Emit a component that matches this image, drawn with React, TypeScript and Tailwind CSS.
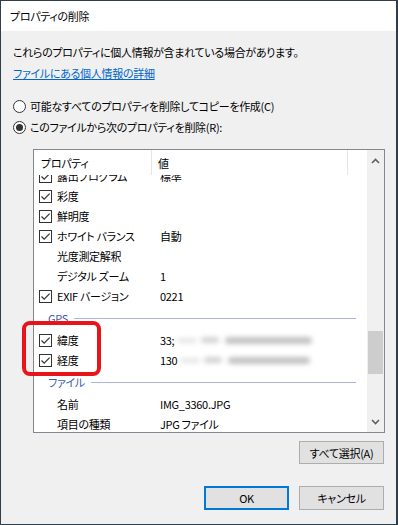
import React from "react";

const font = "font-['Yu_Gothic_UI','Noto_Sans_CJK_JP',sans-serif] [font-feature-settings:'palt'] tracking-[-0.3px]";

function Check({ checked = true }: { checked?: boolean }) {
  return (
    <div className="w-[13px] h-[13px] border border-[#333333] bg-white flex items-center justify-center shrink-0">
      {checked && (
        <svg width="11" height="11" viewBox="0 0 11 11">
          <path d="M1.5 5.5 L4.2 8.2 L9.6 2.6" fill="none" stroke="#333333" strokeWidth="1.2" />
        </svg>
      )}
    </div>
  );
}

function Radio({ selected }: { selected?: boolean }) {
  return (
    <div className="w-[13px] h-[13px] rounded-full border border-[#333333] bg-white flex items-center justify-center shrink-0">
      {selected && <div className="w-[7px] h-[7px] rounded-full bg-[#333333]" />}
    </div>
  );
}

type Row = { label: string; value?: React.ReactNode; check?: boolean; style?: string };

function ItemRow({ label, value, check, style }: Row) {
  return (
    <div className={"flex items-center h-[20px] shrink-0 " + (style ?? "")}>
      <div className="w-[126px] flex items-center pl-[5px] gap-[5px]">
        {check ? <Check /> : <div className="w-[13px] shrink-0" />}
        <span className="whitespace-nowrap">{label}</span>
      </div>
      <div className="whitespace-nowrap flex items-center">{value}</div>
    </div>
  );
}

function Group({ label }: { label: string }) {
  return (
    <div className="flex items-center h-[24px] shrink-0 pl-[14px] pr-[11px]">
      <span className="text-[#3c5bb5] whitespace-nowrap">{label}</span>
      <div className="flex-1 h-px bg-[#aeb4dd] ml-[6px]" />
    </div>
  );
}

function Blur({ w }: { w: number }) {
  return (
    <span className="inline-flex items-center ml-[3px] blur-[2.5px]" style={{ width: w }}>
      <span className="inline-block h-[5px] w-[20px] bg-[#e6e6e6] rounded-full" />
      <span className="inline-block h-[6px] w-[18px] bg-[#d2d2d2] rounded-full ml-[4px]" />
      <span className="inline-block h-[7px] flex-1 bg-[#c2c2c2] rounded-full ml-[6px]" />
    </span>
  );
}

export default function App() {
  return (
    <div className={"w-[398px] h-[525px] bg-[#f0f0f0] border border-r-2 border-[#2f3e48] relative text-[11px] leading-[16px] text-black " + font}>
      <div className="h-[30px] bg-white flex items-center pl-[9px]">
        <span>プロパティの削除</span>
      </div>
      <div className="flex flex-col pl-[12px] pt-[13px]">
        <div>これらのプロパティに個人情報が含まれている場合があります。</div>
        <div className="mt-[5px] text-[#0066cc] underline">ファイルにある個人情報の詳細</div>
        <div className="mt-[17px] flex items-center gap-[4px] h-[16px]">
          <Radio />
          <span>可能なすべてのプロパティを削除してコピーを作成(C)</span>
        </div>
        <div className="mt-[5px] flex items-center gap-[4px] h-[16px]">
          <Radio selected />
          <span>このファイルから次のプロパティを削除(R):</span>
        </div>
        <div className="mt-[14px] ml-[20px] w-[352px] h-[284px] border border-[#828790] bg-white flex">
          <div className="flex-1 flex flex-col overflow-hidden relative">
            <div className="h-[25px] flex shrink-0 bg-white relative z-10">
              <div className="w-[118px] pl-[7px] flex items-center border-r border-[#e5e5e5]">プロパティ</div>
              <div className="w-[196px] pl-[6px] flex items-center border-r border-[#e5e5e5]">値</div>
            </div>
            <div className="flex flex-col">
              <ItemRow label="露出プログラム" value="標準" check style="-mt-[9px]" />
              <ItemRow label="彩度" check />
              <ItemRow label="鮮明度" check />
              <ItemRow label="ホワイト バランス" value="自動" check />
              <ItemRow label="光度測定解釈" />
              <ItemRow label="デジタル ズーム" value="1" />
              <ItemRow label="EXIF バージョン" value="0221" check />
              <Group label="GPS" />
              <ItemRow label="緯度" value={<><span>33;</span><Blur w={135} /></>} check />
              <ItemRow label="経度" value={<><span>130</span><Blur w={130} /></>} check />
              <Group label="ファイル" />
              <ItemRow label="名前" value="IMG_3360.JPG" />
              <ItemRow label="項目の種類" value="JPG ファイル" />
            </div>
          </div>
          <div className="w-[17px] bg-[#f0f0f0] flex flex-col items-center">
            <div className="h-[22px] flex items-center justify-center w-full">
              <svg width="9" height="6" viewBox="0 0 9 6">
                <path d="M1 5 L4.5 1.5 L8 5" fill="none" stroke="#606060" strokeWidth="1.6" />
              </svg>
            </div>
            <div className="mt-[159px] w-[15px] h-[43px] bg-[#cdcdcd]" />
            <div className="flex-1" />
            <div className="h-[20px] flex items-center justify-center w-full">
              <svg width="9" height="6" viewBox="0 0 9 6">
                <path d="M1 1 L4.5 4.5 L8 1" fill="none" stroke="#606060" strokeWidth="1.6" />
              </svg>
            </div>
          </div>
        </div>
        <div className="mt-[8px] ml-[286px] w-[85px] h-[23px] bg-[#e1e1e1] border border-[#adadad] flex items-center justify-center">
          すべて選択(A)
        </div>
        <div className="mt-[22px] ml-[191px] flex gap-[10px]">
          <div className="w-[85px] h-[24px] bg-[#e1e1e1] border-2 border-[#0078d7] flex items-center justify-center">OK</div>
          <div className="w-[85px] h-[24px] bg-[#e1e1e1] border border-[#adadad] flex items-center justify-center">キャンセル</div>
        </div>
      </div>
      <div className="absolute left-[21px] top-[320px] w-[79px] h-[55px] border-4 border-[#e8141a] rounded-[8px]" />
    </div>
  );
}
